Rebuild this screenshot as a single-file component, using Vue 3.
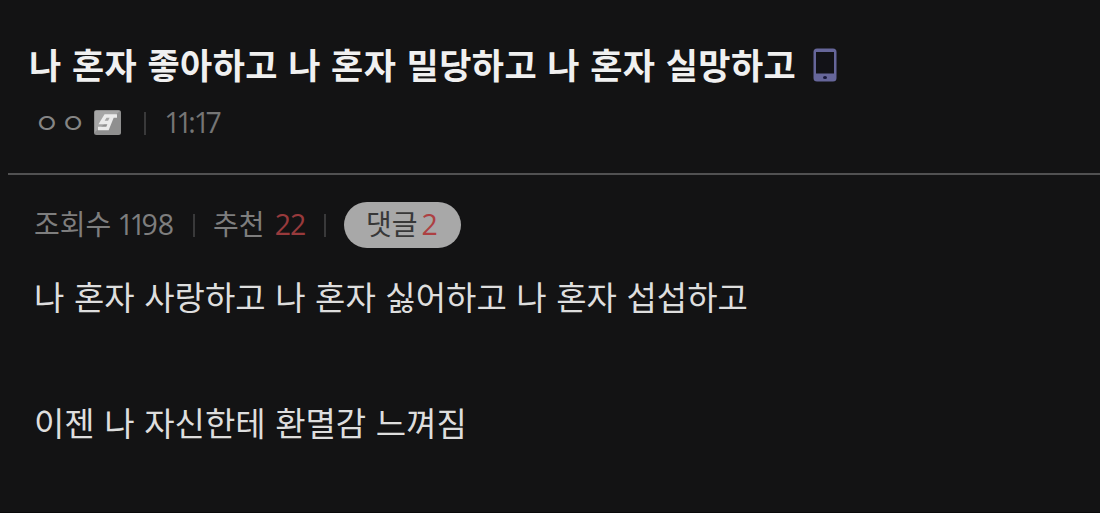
<template>
  <article class="post">
    <header class="head">
      <h1 class="title">
        <span class="title-text">{{ post.title }}</span>
        <svg class="phone" viewBox="0 0 24 34" width="24" height="34">
          <rect x="0.5" y="0.5" width="23" height="33" rx="3.5" fill="#66669a" />
          <rect x="3" y="4" width="18" height="21.5" fill="#121217" />
          <ellipse cx="12" cy="29.5" rx="2" ry="1.6" fill="#17173a" />
        </svg>
      </h1>
      <div class="byline">
        <span class="author">{{ post.author }}</span>
        <svg class="badge" viewBox="0 0 27 25" width="27" height="25">
          <rect x="0" y="0" width="27" height="25" rx="2.5" fill="#8f8f8f" />
          <path d="M1 1h25L1 22z" fill="#a6a6a6" />
          <path d="M23 6H11.500L7.500 12.500H15L18.500 6L13.500 18.500H4" fill="none" stroke="#ebebeb" stroke-width="3.4" />
        </svg>
        <i class="bar"></i>
        <time class="time num"><span v-for="(c, i) in post.time" :key="i" :class="digitClass(c)">{{ c }}</span></time>
      </div>
    </header>

    <div class="stats">
      <span class="views">조회수 <span class="num"><span v-for="(c, i) in post.views" :key="i" :class="digitClass(c)">{{ c }}</span></span></span>
      <i class="bar"></i>
      <span class="likes">추천 <em class="num">{{ post.likes }}</em></span>
      <i class="bar"></i>
      <span class="comments">댓글<em class="num">{{ post.comments }}</em></span>
    </div>

    <div class="body">
      <p v-for="line in post.lines" :key="line">{{ line }}</p>
    </div>
  </article>
</template>

<script setup>
const post = {
  title: '나 혼자 좋아하고 나 혼자 밀당하고 나 혼자 실망하고',
  author: 'ㅇㅇ',
  time: '11:17',
  views: '1198',
  likes: 22,
  comments: 2,
  lines: [
    '나 혼자 사랑하고 나 혼자 싫어하고 나 혼자 섭섭하고',
    '이젠 나 자신한테 환멸감 느껴짐'
  ]
}

// 1 and the colon sit closer to their neighbours
const digitClass = c => ({ one: c === '1', colon: c === ':' })
</script>

<style>
body {
  background: #131314;
}
</style>

<style scoped>
.post {
  box-sizing: border-box;
  height: 513px;
  overflow: hidden;
  border-bottom: 1px solid #09090a;
  background: #131314;
  color: #dedede;
  font-family: 'Noto Sans CJK KR', sans-serif;
  white-space: nowrap;
}

.head {
  box-sizing: border-box;
  height: 175px;
  margin-left: 8px;
  padding: 40px 0 0 21px;
  border-bottom: 2px solid #515152;
}

.title {
  display: flex;
  align-items: center;
  height: 50px;
  margin: 0;
  color: #f0f0f0;
  font-size: 35px;
  line-height: 50px;
}

.title-text {
  padding-bottom: 2px;
  letter-spacing: 0.42px;
  word-spacing: 1.9px;
}

.phone {
  margin-left: 17px;
}

.byline {
  display: flex;
  align-items: center;
  height: 40px;
  margin: 12px 0 0 5px;
  color: #858585;
  font-size: 28px;
}

.author {
  padding-bottom: 1px;
  letter-spacing: 0.4px;
}

.num {
  font-family: 'Open Sans', sans-serif;
  font-size: 28.5px;
}

.time {
  color: #757575;
}

.one {
  letter-spacing: -4.4px;
}

.colon {
  letter-spacing: -2px;
}

.badge {
  margin-left: 8px;
}

.bar {
  flex: none;
  width: 2px;
  height: 23px;
  background: #39393a;
}

.byline .bar {
  margin: 2px 18px 0 23px;
}

.stats {
  display: flex;
  align-items: center;
  height: 46px;
  margin: 27px 0 0 34px;
  color: #7e7e7e;
  font-size: 28px;
  line-height: 40px;
}

.views,
.likes {
  padding-bottom: 3px;
}

.views {
  width: 141px;
}

.likes {
  width: 93px;
}

.stats .bar {
  margin: 0 18px;
}

em {
  color: #983a3c;
  font-style: normal;
}

.likes em {
  margin-left: 4px;
  letter-spacing: -1px;
}

.comments {
  box-sizing: border-box;
  width: 117px;
  height: 46px;
  padding-left: 22px;
  border-radius: 23px;
  background: #a8a8a8;
  color: #383838;
  line-height: 43px;
}

.comments em {
  margin-left: 4px;
  color: #ad4042;
}

.body {
  margin: 23px 0 0 34px;
  font-size: 33px;
  line-height: 50px;
  word-spacing: 2.15px;
}

.body p {
  margin: 0 0 76px;
}
</style>
